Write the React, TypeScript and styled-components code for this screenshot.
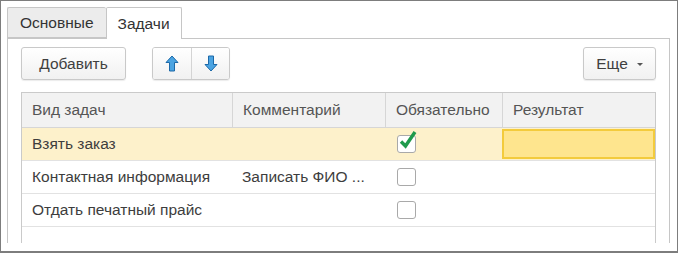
import { createGlobalStyle, styled } from "styled-components";

const GlobalStyle = createGlobalStyle`
  html, body {
    margin: 0;
    padding: 0;
    background: #ffffff;
  }
  body {
    font-family: "Liberation Sans", Arial, sans-serif;
  }
`;

// Outer frame of the screenshot
const Frame = styled.div`
  box-sizing: border-box;
  width: 678px;
  height: 253px;
  border: 1px solid #7d7d7d;
  border-bottom-width: 2px;
  padding: 6px 7px 0 6px;
  background: #fff;
  overflow: hidden;
`;

const Clip = styled.div`
  height: 236px;
  overflow: hidden;
`;

const TabBar = styled.div`
  display: flex;
  align-items: flex-start;
  height: 31px;
`;

const Tab = styled.div<{ $active?: boolean }>`
  position: relative;
  z-index: 1;
  box-sizing: border-box;
  height: ${(p) => (p.$active ? "32px" : "31px")};
  padding: 0 ${(p) => (p.$active ? "11px" : "12px")};
  display: flex;
  align-items: center;
  font-size: 15.5px;
  color: #333;
  background: ${(p) => (p.$active ? "#ffffff" : "#ececec")};
  border: 1px solid #c6c6c6;
  border-bottom: ${(p) => (p.$active ? "none" : "1px solid #c6c6c6")};
  border-right: ${(p) => (p.$active ? "1px solid #c6c6c6" : "none")};
  border-radius: 2px 2px 0 0;
`;

const Panel = styled.div`
  border: 1px solid #c6c6c6;
  padding: 8px 13px 0 13px;
  height: 300px;
`;

const Toolbar = styled.div`
  display: flex;
  align-items: center;
  height: 33px;
`;

const Button = styled.button<{ $width: number }>`
  box-sizing: border-box;
  width: ${(p) => p.$width}px;
  height: 33px;
  display: flex;
  align-items: center;
  justify-content: center;
  gap: 9px;
  padding: 0;
  font-family: inherit;
  font-size: 15.5px;
  color: #404040;
  background: linear-gradient(#ffffff, #f1f1f1);
  border: 1px solid #c9c9c9;
  border-radius: 3px;
  box-shadow: 0 1px 1px rgba(0, 0, 0, 0.08);
`;

const ButtonGroup = styled.div`
  display: flex;
  margin-left: 26px;
  border: 1px solid #c9c9c9;
  border-radius: 3px;
  box-shadow: 0 1px 1px rgba(0, 0, 0, 0.08);
  overflow: hidden;
`;

const GroupButton = styled.button`
  box-sizing: border-box;
  width: 38px;
  height: 31px;
  display: flex;
  align-items: center;
  justify-content: center;
  padding: 0;
  background: linear-gradient(#ffffff, #f1f1f1);
  border: none;
  & + & {
    border-left: 1px solid #d4d4d4;
  }
`;

const Spacer = styled.div`
  flex: 1;
`;

const Caret = styled.span`
  width: 0;
  height: 0;
  border-left: 3px solid transparent;
  border-right: 3px solid transparent;
  border-top: 3px solid #555;
  margin-top: 1px;
`;

const Table = styled.div`
  box-sizing: border-box;
  width: 635px;
  margin-top: 12px;
  border: 1px solid #cacaca;
  font-size: 15.5px;
`;

const Row = styled.div<{ $header?: boolean; $current?: boolean }>`
  display: grid;
  grid-template-columns: 210px 153px 117px 1fr;
  height: ${(p) => (p.$header ? "34px" : "32px")};
  border-bottom: 1px solid ${(p) => (p.$header ? "#d6d6d6" : "#e2e2e2")};
  background: ${(p) =>
    p.$header ? "#f2f2f2" : p.$current ? "#fdf1cb" : "#ffffff"};
  color: ${(p) => (p.$header ? "#555" : "#3d3d3d")};
`;

const Cell = styled.div<{ $sep?: boolean }>`
  display: flex;
  align-items: center;
  padding-left: 10px;
  white-space: nowrap;
  overflow: hidden;
  border-left: ${(p) => (p.$sep ? "1px solid #d6d6d6" : "none")};
`;

const CheckCell = styled.div`
  display: flex;
  align-items: center;
  padding-left: 12px;
`;

const SelectedCell = styled.div`
  margin: 1px 0 1px 0;
  background: #fee58e;
  box-shadow: inset 0 0 0 2px #f3cb3c;
`;

const Box = styled.div`
  position: relative;
  box-sizing: border-box;
  width: 19px;
  height: 18px;
  border: 1px solid #a9a9a9;
  border-radius: 3px;
  background: #fff;
`;

const CheckMark = styled.svg`
  position: absolute;
  left: 0;
  top: -7px;
`;

const ArrowUp = () => (
  <svg width="14" height="17" viewBox="0 0 14 17">
    <polygon
      points="7,1 13,7.5 9.5,7.5 9.5,16 4.5,16 4.5,7.5 1,7.5"
      fill="#4ba4e2"
      stroke="#1c69a8"
      strokeWidth="1"
      strokeLinejoin="round"
    />
  </svg>
);

const ArrowDown = () => (
  <svg width="14" height="17" viewBox="0 0 14 17">
    <polygon
      points="7,16 13,9.5 9.5,9.5 9.5,1 4.5,1 4.5,9.5 1,9.5"
      fill="#4ba4e2"
      stroke="#1c69a8"
      strokeWidth="1"
      strokeLinejoin="round"
    />
  </svg>
);

const Checkbox = ({ checked }: { checked?: boolean }) => (
  <Box>
    {checked && (
      <CheckMark width="20" height="22" viewBox="0 0 20 22">
        <path
          d="M3 12.5 L7.5 17 L17 3"
          fill="none"
          stroke="#1f9a4c"
          strokeWidth="3.4"
        />
      </CheckMark>
    )}
  </Box>
);

const rows = [
  { task: "Взять заказ", comment: "", required: true, current: true },
  {
    task: "Контактная информация",
    comment: "Записать ФИО ...",
    required: false,
    current: false,
  },
  { task: "Отдать печатный прайс", comment: "", required: false, current: false },
];

export default function App() {
  return (
    <>
      <GlobalStyle />
      <Frame>
        <Clip>
          <TabBar>
            <Tab>Основные</Tab>
            <Tab $active>Задачи</Tab>
          </TabBar>
          <Panel>
            <Toolbar>
              <Button $width={105}>Добавить</Button>
              <ButtonGroup>
                <GroupButton>
                  <ArrowUp />
                </GroupButton>
                <GroupButton>
                  <ArrowDown />
                </GroupButton>
              </ButtonGroup>
              <Spacer />
              <Button $width={73}>
                Еще
                <Caret />
              </Button>
            </Toolbar>
            <Table>
              <Row $header>
                <Cell>Вид задач</Cell>
                <Cell $sep>Комментарий</Cell>
                <Cell $sep>Обязательно</Cell>
                <Cell $sep>Результат</Cell>
              </Row>
              {rows.map((r) => (
                <Row key={r.task} $current={r.current}>
                  <Cell>{r.task}</Cell>
                  <Cell>{r.comment}</Cell>
                  <CheckCell>
                    <Checkbox checked={r.required} />
                  </CheckCell>
                  {r.current ? <SelectedCell /> : <Cell />}
                </Row>
              ))}
              <Row />
            </Table>
          </Panel>
        </Clip>
      </Frame>
    </>
  );
}
